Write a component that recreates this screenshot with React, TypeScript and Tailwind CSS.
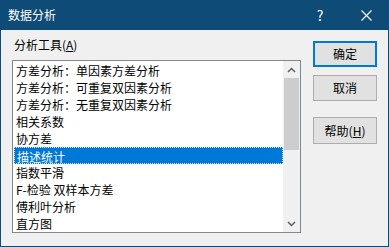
import React from "react";

const items = [
  "方差分析：单因素方差分析",
  "方差分析：可重复双因素分析",
  "方差分析：无重复双因素分析",
  "相关系数",
  "协方差",
  "描述统计",
  "指数平滑",
  "F-检验 双样本方差",
  "傅利叶分析",
  "直方图",
];

const font = { fontFamily: '"Microsoft YaHei UI","Noto Sans CJK SC","Noto Sans",sans-serif' };

export default function App() {
  return (
    <div
      className="w-[389px] h-[247px] bg-[#0e4b76] flex flex-col text-[12px] text-black"
      style={font}
    >
      {/* title bar */}
      <div className="h-[30px] flex items-center text-white pl-[8px]">
        <span className="flex-1 text-[12px] leading-none">数据分析</span>
        <span className="w-[46px] text-center text-[14px] leading-none">?</span>
        <span className="w-[46px] flex justify-center">
          <svg width="11" height="11" viewBox="0 0 11 11">
            <path d="M0.5 0.5L10.5 10.5M10.5 0.5L0.5 10.5" stroke="white" strokeWidth="1.1" />
          </svg>
        </span>
      </div>
      {/* body */}
      <div className="flex-1 mx-[1px] mb-[1px] bg-[#f0f0f0] flex">
        <div className="flex flex-col pl-[11px] pt-[6px]">
          <div className="h-[18px] leading-[18px] pl-[2px]">
            分析工具(<span className="underline">A</span>)
          </div>
          <div className="mt-[6px] w-[289px] h-[173px] border border-[#828790] bg-white flex">
            <div className="flex-1 pt-[1px] pl-[1px]">
              {items.map((t, i) => (
                <div
                  key={t}
                  className={
                    "h-[17px] leading-[17px] pl-[2px] whitespace-nowrap " +
                    (i === 5
                      ? "bg-[#0078d7] text-white border border-dotted border-[#cfe3f7] leading-[15px]"
                      : "")
                  }
                >
                  {t}
                </div>
              ))}
            </div>
            <div className="w-[17px] bg-[#f0f0f0] flex flex-col">
              <div className="h-[17px] flex items-center justify-center">
                <svg width="9" height="6" viewBox="0 0 9 6">
                  <path d="M1 5L4.5 1.5L8 5" stroke="#606060" strokeWidth="1.5" fill="none" />
                </svg>
              </div>
              <div className="h-[72px] bg-[#cdcdcd] mx-[1px]" />
              <div className="flex-1" />
              <div className="h-[17px] flex items-center justify-center">
                <svg width="9" height="6" viewBox="0 0 9 6">
                  <path d="M1 1L4.5 4.5L8 1" stroke="#606060" strokeWidth="1.5" fill="none" />
                </svg>
              </div>
            </div>
          </div>
        </div>
        <div className="flex flex-col pl-[12px] pt-[11px]">
          <div className="w-[64px] h-[26px] border-2 border-[#0078d7] bg-[#e1e1e1] flex items-center justify-center">
            确定
          </div>
          <div className="mt-[8px] w-[64px] h-[26px] border border-[#adadad] bg-[#e1e1e1] flex items-center justify-center">
            取消
          </div>
          <div className="mt-[16px] w-[64px] h-[27px] border border-[#adadad] bg-[#e1e1e1] flex items-center justify-center">
            帮助(<span className="underline">H</span>)
          </div>
        </div>
      </div>
    </div>
  );
}
